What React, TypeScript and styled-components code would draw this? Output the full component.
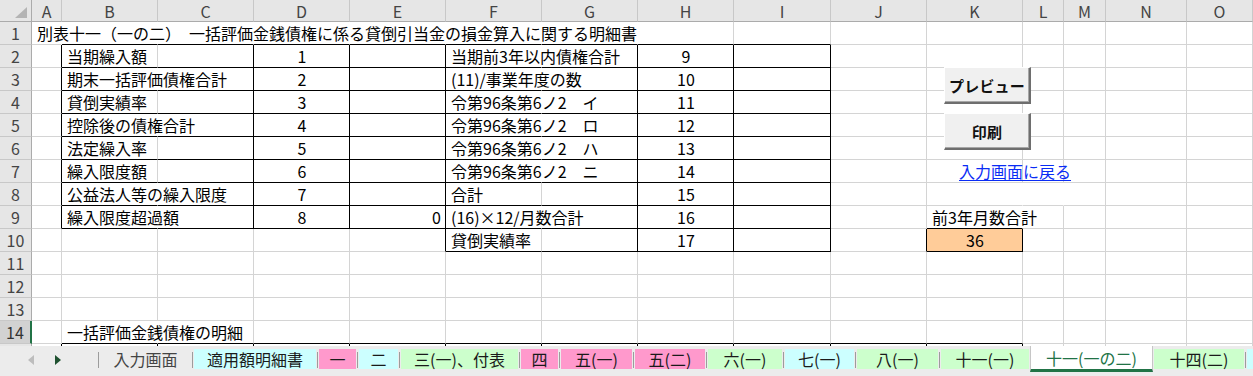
import React from 'react';
import styled, { createGlobalStyle } from 'styled-components';

const GlobalStyle = createGlobalStyle`
  html, body { margin: 0; padding: 0; background: #ffffff; }
  body { font-family: "Noto Sans CJK JP", "Noto Sans", sans-serif; }
  #root { width: 1253px; height: 376px; overflow: hidden; }
`;

type Edge = 'grid' | 'black' | 'none';
type Align = 'left' | 'center' | 'right';

const EDGE: Record<Edge, string> = {
  grid: '#d4d4d4',
  black: '#000000',
  none: 'transparent',
};

const COL_WIDTHS = [30, 96, 96, 96, 96, 96, 96, 96, 97, 96, 96, 41, 42, 81, 66];
const LETTERS = ['A', 'B', 'C', 'D', 'E', 'F', 'G', 'H', 'I', 'J', 'K', 'L', 'M', 'N', 'O'];
const ROWS = 15;
const VISIBLE_LABEL_ROWS = 14;
const ACTIVE_ROW = 14;

const TITLE = '別表十一（一の二）　一括評価金銭債権に係る貸倒引当金の損金算入に関する明細書';

const LEFT: Record<number, [string, string]> = {
  2: ['当期繰入額', '1'],
  3: ['期末一括評価債権合計', '2'],
  4: ['貸倒実績率', '3'],
  5: ['控除後の債権合計', '4'],
  6: ['法定繰入率', '5'],
  7: ['繰入限度額', '6'],
  8: ['公益法人等の繰入限度', '7'],
  9: ['繰入限度超過額', '8'],
};
const SHORT_LEFT = new Set([2, 4, 6, 7]);

const RIGHT: Record<number, [string, string]> = {
  2: ['当期前3年以内債権合計', '9'],
  3: ['(11)/事業年度の数', '10'],
  4: ['令第96条第6ノ2　イ', '11'],
  5: ['令第96条第6ノ2　ロ', '12'],
  6: ['令第96条第6ノ2　ハ', '13'],
  7: ['令第96条第6ノ2　ニ', '14'],
  8: ['合計', '15'],
  9: ['(16)×12/月数合計', '16'],
  10: ['貸倒実績率', '17'],
};
const SHORT_RIGHT = new Set([8, 10]);

interface CellSpec {
  text?: string;
  align: Align;
  r: Edge;
  b: Edge;
  bg?: string;
}

function buildCell(row: number, col: number): CellSpec {
  let r: Edge = 'grid';
  let b: Edge = 'grid';
  let text: string | undefined;
  let align: Align = 'left';
  let bg: string | undefined;

  if (row === 1) {
    if (col <= 6) r = 'none';
    if (col >= 1 && col <= 8) b = 'black';
    if (col === 0) text = TITLE;
  }
  if (row >= 2 && row <= 9) {
    if (col === 0) r = 'black';
    if (col >= 1 && col <= 4) b = 'black';
    if (col === 1) {
      text = LEFT[row][0];
      r = SHORT_LEFT.has(row) ? 'grid' : 'none';
    }
    if (col === 2 || col === 3) r = 'black';
    if (col === 3) {
      text = LEFT[row][1];
      align = 'center';
    }
  }
  if (row >= 2 && row <= 10) {
    if (col === 4) r = 'black';
    if (col >= 5 && col <= 8) b = 'black';
    if (col === 5) {
      text = RIGHT[row][0];
      r = SHORT_RIGHT.has(row) ? 'grid' : 'none';
    }
    if (col === 6 || col === 7 || col === 8) r = 'black';
    if (col === 7) {
      text = RIGHT[row][1];
      align = 'center';
    }
  }
  if (row === 9 && col === 4) {
    text = '0';
    align = 'right';
  }
  if (row === 8 && (col === 10 || col === 11)) r = 'none';
  if (row === 9 && col === 10) {
    text = '前3年月数合計';
    r = 'none';
    b = 'black';
  }
  if (row === 10 && col === 9) r = 'black';
  if (row === 10 && col === 10) {
    text = '36';
    align = 'center';
    r = 'black';
    b = 'black';
    bg = '#ffcc99';
  }
  if (row === 14) {
    if (col >= 1 && col <= 10) b = 'black';
    if (col === 1) {
      text = '一括評価金銭債権の明細';
      r = 'none';
    }
  }
  if (row === 15) {
    if (col <= 10) r = 'black';
  }
  return { text, align, r, b, bg };
}

interface TabSpec {
  label: string;
  width: number;
  bg?: string;
  active?: boolean;
  plain?: boolean;
}

const PINK = '#ff99cc';
const CYAN = '#ccffff';
const GREEN = '#ccffcc';

const TABS: TabSpec[] = [
  { label: '入力画面', width: 91, plain: true },
  { label: '適用額明細書', width: 122, bg: CYAN },
  { label: '一', width: 37, bg: PINK },
  { label: '二', width: 39, bg: CYAN },
  { label: '三(一)、付表', width: 117, bg: GREEN },
  { label: '四', width: 37, bg: PINK },
  { label: '五(一)', width: 71, bg: PINK },
  { label: '五(二)', width: 70, bg: PINK },
  { label: '六(一)', width: 74, bg: GREEN },
  { label: '七(一)', width: 69, bg: CYAN },
  { label: '八(一)', width: 81, bg: GREEN },
  { label: '十一(一)', width: 88, bg: GREEN },
  { label: '十一(一の二)', width: 123, active: true },
  { label: '十四(二)', width: 90, bg: GREEN },
  { label: '', width: 40, bg: CYAN },
];

/* ---------- layout ---------- */

const Screen = styled.div`
  width: 1253px;
  height: 376px;
  display: flex;
  flex-direction: column;
  overflow: hidden;
  background: #ffffff;
`;

const SheetArea = styled.div`
  position: relative;
  flex: none;
  height: 346px;
  overflow: hidden;
`;

const Grid = styled.div`
  display: grid;
  grid-template-columns: 32px ${COL_WIDTHS.map((w) => `${w}px`).join(' ')};
  grid-template-rows: 22px repeat(${ROWS}, 23px);
`;

const Corner = styled.div`
  box-sizing: border-box;
  background: #e6e6e6;
  border-right: 1px solid #ababab;
  border-bottom: 1px solid #ababab;
  display: flex;
  align-items: flex-end;
  justify-content: flex-end;
  padding: 0 4px 3px 0;
`;

const ColHeader = styled.div`
  box-sizing: border-box;
  background: #e6e6e6;
  border-right: 1px solid #c8c8c8;
  border-bottom: 1px solid #ababab;
  display: flex;
  align-items: center;
  justify-content: center;
  font-size: 16px;
  color: #444444;
  line-height: 20px;
`;

const RowHeader = styled.div<{ $active?: boolean }>`
  box-sizing: border-box;
  background: ${(p) => (p.$active ? '#d2d2d2' : '#e6e6e6')};
  border-right: ${(p) => (p.$active ? '2px solid #217346' : '1px solid #ababab')};
  border-bottom: 1px solid #c8c8c8;
  display: flex;
  align-items: center;
  justify-content: center;
  font-size: 16px;
  color: ${(p) => (p.$active ? '#333333' : '#444444')};
  line-height: 20px;
`;

const Cell = styled.div<{ $r: Edge; $b: Edge; $align: Align; $bg?: string }>`
  box-sizing: border-box;
  border-right: 1px solid ${(p) => EDGE[p.$r]};
  border-bottom: 1px solid ${(p) => EDGE[p.$b]};
  background: ${(p) => p.$bg ?? 'transparent'};
  display: flex;
  align-items: center;
  justify-content: ${(p) =>
    p.$align === 'center' ? 'center' : p.$align === 'right' ? 'flex-end' : 'flex-start'};
  padding: 0 4px 0 5px;
  white-space: nowrap;
  overflow: visible;
  font-size: 16px;
  line-height: 22px;
  color: #000000;
`;

/* ---------- overlays (form controls on the sheet) ---------- */

const FormButton = styled.div<{ $top: number }>`
  position: absolute;
  left: 944px;
  top: ${(p) => p.$top}px;
  width: 87px;
  height: 37px;
  box-sizing: border-box;
  background: #f0f0f0;
  border-top: 1px solid #ffffff;
  border-left: 1px solid #ffffff;
  border-right: 2px solid #6e6e6e;
  border-bottom: 2px solid #6e6e6e;
  box-shadow: inset -1px -1px 0 #a6a6a6;
  display: flex;
  align-items: center;
  justify-content: center;
  font-size: 15px;
  font-weight: 700;
  color: #111111;
  letter-spacing: 0.2px;
`;

const SheetLink = styled.a`
  position: absolute;
  left: 959px;
  top: 160px;
  font-size: 16px;
  line-height: 22px;
  color: #0a2cf5;
  text-decoration: underline;
  text-underline-offset: 2px;
  white-space: nowrap;
  cursor: pointer;
`;

/* ---------- tab bar ---------- */

const TabBar = styled.div`
  flex: 1;
  display: flex;
  align-items: flex-start;
  background: #ececec;
  overflow: hidden;
`;

const NavArea = styled.div`
  flex: none;
  width: 98px;
  height: 26px;
  display: flex;
  align-items: center;
  padding: 2px 0 0 28px;
  box-sizing: border-box;
  gap: 21px;
`;

const NavArrow = styled.svg`
  display: block;
  width: 6px;
  height: 10px;
`;

const TabSep = styled.div`
  flex: none;
  width: 1px;
  height: 16px;
  margin-top: 6px;
  background: #9c9c9c;
`;

const Tab = styled.div<{ $w: number; $bg?: string; $plain?: boolean }>`
  flex: none;
  box-sizing: border-box;
  width: ${(p) => p.$w}px;
  height: 20px;
  margin: 3px 1px 0;
  background: ${(p) => p.$bg ?? 'transparent'};
  display: flex;
  align-items: center;
  justify-content: center;
  font-size: 16px;
  line-height: 20px;
  white-space: nowrap;
  color: ${(p) => (p.$plain ? '#444444' : '#1a1a1a')};
`;

const ActiveTab = styled.div<{ $w: number }>`
  flex: none;
  box-sizing: border-box;
  width: ${(p) => p.$w}px;
  height: 26px;
  background: #ffffff;
  border: 1px solid #c6c6c6;
  border-top: none;
  border-bottom: 3px solid #217346;
  display: flex;
  align-items: center;
  justify-content: center;
  font-size: 16px;
  line-height: 20px;
  white-space: nowrap;
  color: #217346;
`;

function CornerMark() {
  return (
    <svg width="12" height="11" viewBox="0 0 12 11">
      <polygon points="12,0 12,11 0,11" fill="#b4b4b4" />
    </svg>
  );
}

export default function App() {
  const rows = Array.from({ length: ROWS }, (_, i) => i + 1);
  return (
    <>
      <GlobalStyle />
      <Screen>
        <SheetArea>
          <Grid>
            <Corner>
              <CornerMark />
            </Corner>
            {LETTERS.map((l) => (
              <ColHeader key={l}>{l}</ColHeader>
            ))}
            {rows.map((row) => (
              <React.Fragment key={row}>
                <RowHeader $active={row === ACTIVE_ROW}>
                  {row <= VISIBLE_LABEL_ROWS ? row : null}
                </RowHeader>
                {LETTERS.map((l, col) => {
                  const c = buildCell(row, col);
                  return (
                    <Cell key={l} $r={c.r} $b={c.b} $align={c.align} $bg={c.bg}>
                      {c.text}
                    </Cell>
                  );
                })}
              </React.Fragment>
            ))}
          </Grid>
          <FormButton $top={67}>プレビュー</FormButton>
          <FormButton $top={113}>印刷</FormButton>
          <SheetLink>入力画面に戻る</SheetLink>
        </SheetArea>
        <TabBar>
          <NavArea>
            <NavArrow viewBox="0 0 6 10">
              <polygon points="6,0 6,10 0,5" fill="#bdbdbd" />
            </NavArrow>
            <NavArrow viewBox="0 0 6 10">
              <polygon points="0,0 0,10 6,5" fill="#1f5130" />
            </NavArrow>
          </NavArea>
          <TabSep />
          {TABS.map((t, i) => {
            const next = TABS[i + 1];
            const showSep = !t.active && !(next && next.active) && i < TABS.length - 1;
            return (
              <React.Fragment key={i}>
                {t.active ? (
                  <ActiveTab $w={t.width}>{t.label}</ActiveTab>
                ) : (
                  <Tab $w={t.width} $bg={t.bg} $plain={t.plain}>
                    {t.label}
                  </Tab>
                )}
                {showSep && <TabSep />}
              </React.Fragment>
            );
          })}
        </TabBar>
      </Screen>
    </>
  );
}
